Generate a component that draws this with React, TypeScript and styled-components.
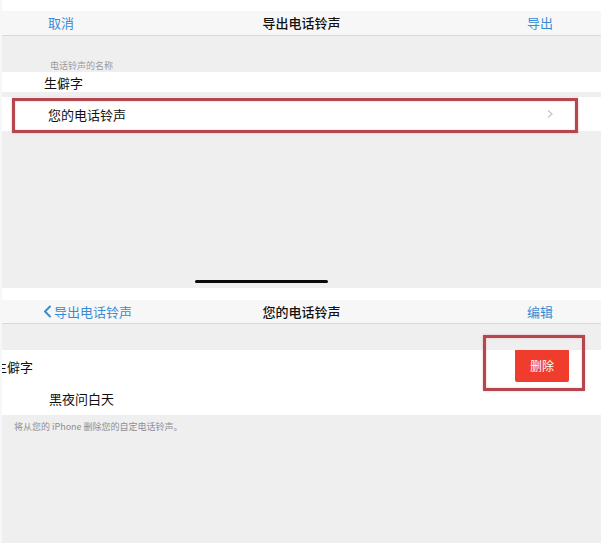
import React from "react";
import styled, { createGlobalStyle } from "styled-components";

const GlobalStyle = createGlobalStyle`
  html, body { margin: 0; padding: 0; background: #efeff0; }
  body { font-family: "Noto Sans CJK SC", "Noto Sans", sans-serif; }
  * { box-sizing: border-box; }
`;

const Page = styled.div`
  width: 601px;
  height: 543px;
  display: flex;
  flex-direction: column;
  overflow: hidden;
`;

const Panel = styled.section<{ $h: number }>`
  position: relative;
  height: ${(p) => p.$h}px;
  display: flex;
  flex-direction: column;
  background: #efeff0;
  border-left: 2px solid #f7f7f7;
  flex-shrink: 0;
`;

const TopStrip = styled.div<{ $h: number }>`
  height: ${(p) => p.$h}px;
  background: #ffffff;
  flex-shrink: 0;
`;

const NavBar = styled.header<{ $h: number }>`
  height: ${(p) => p.$h}px;
  background: #f7f7f8;
  border-bottom: 1px solid #d9d9db;
  display: grid;
  grid-template-columns: 1fr auto 1fr;
  align-items: center;
  font-size: 13px;
  line-height: 16px;
  flex-shrink: 0;
`;

const NavLeft = styled.div<{ $pad: number }>`
  padding-left: ${(p) => p.$pad}px;
  display: flex;
  align-items: center;
  gap: 2px;
  color: #3a8bd3;
`;

const NavTitle = styled.div`
  color: #111;
  font-weight: 500;
  text-align: center;
`;

const NavRight = styled.div`
  justify-self: end;
  padding-right: 48px;
  color: #3a8bd3;
`;

const SectionLabel = styled.div`
  padding: 24px 0 0 48px;
  font-size: 9px;
  line-height: 12px;
  color: #9a9a9e;
`;

const Row = styled.div<{ $h: number; $indent: number }>`
  position: relative;
  height: ${(p) => p.$h}px;
  background: #ffffff;
  display: flex;
  align-items: center;
  padding-left: ${(p) => p.$indent}px;
  font-size: 13px;
  color: #111;
  flex-shrink: 0;
`;

const RowText = styled.span<{ $shift?: number }>`
  margin-left: ${(p) => p.$shift ?? 0}px;
  white-space: nowrap;
`;

const Chevron = styled.svg`
  position: absolute;
  right: 48px;
  top: 50%;
  transform: translateY(-50%);
`;

const Highlight = styled.div<{ $l: number; $t: number; $w: number; $h: number }>`
  position: absolute;
  left: ${(p) => p.$l}px;
  top: ${(p) => p.$t}px;
  width: ${(p) => p.$w}px;
  height: ${(p) => p.$h}px;
  border: 3px solid #b3474d;
  box-shadow: 0 0 2px rgba(240, 150, 150, 0.7), inset 0 0 2px rgba(240, 150, 150, 0.7);
  pointer-events: none;
`;

const Spacer = styled.div<{ $h?: number }>`
  height: ${(p) => (p.$h ? `${p.$h}px` : "auto")};
  flex: ${(p) => (p.$h ? "0 0 auto" : "1 1 auto")};
`;

const HomeIndicator = styled.div`
  width: 133px;
  height: 3px;
  margin: 0 0 5px 193px;
  background: #0a0a0a;
  border-radius: 2px;
  flex-shrink: 0;
`;

const List = styled.div`
  display: flex;
  flex-direction: column;
  overflow: hidden;
`;

const DeleteButton = styled.div`
  position: absolute;
  left: 513px;
  top: -1px;
  width: 54px;
  height: 33px;
  background: #f03c2c;
  border-radius: 2px;
  color: #ffffff;
  font-size: 12px;
  display: flex;
  align-items: center;
  justify-content: center;
`;

const Footnote = styled.div`
  padding: 6px 0 0 12px;
  font-size: 9px;
  line-height: 12px;
  color: #8e8e93;
`;

export default function App() {
  return (
    <>
      <GlobalStyle />
      <Page>
        <Panel $h={288}>
          <TopStrip $h={11} />
          <NavBar $h={25}>
            <NavLeft $pad={46}>取消</NavLeft>
            <NavTitle>导出电话铃声</NavTitle>
            <NavRight>导出</NavRight>
          </NavBar>
          <SectionLabel>电话铃声的名称</SectionLabel>
          <Row $h={20} $indent={42}>
            <RowText>生僻字</RowText>
          </Row>
          <Spacer $h={5} />
          <Row $h={34} $indent={46}>
            <RowText>您的电话铃声</RowText>
            <Chevron width="6" height="9" viewBox="0 0 6 9">
              <polyline points="1,1 5,4.5 1,8" fill="none" stroke="#c4c4c8" strokeWidth="1.2" />
            </Chevron>
          </Row>
          <Highlight $l={10} $t={98} $w={566} $h={35} />
          <Spacer />
          <HomeIndicator />
        </Panel>
        <Panel $h={255}>
          <TopStrip $h={12} />
          <NavBar $h={24}>
            <NavLeft $pad={41}>
              <svg width="9" height="13" viewBox="0 0 9 13">
                <polyline points="7,1.5 2,6.5 7,11.5" fill="none" stroke="#3a8bd3" strokeWidth="2" strokeLinecap="round" strokeLinejoin="round" />
              </svg>
              导出电话铃声
            </NavLeft>
            <NavTitle>您的电话铃声</NavTitle>
            <NavRight>编辑</NavRight>
          </NavBar>
          <Spacer $h={26} />
          <List>
            <Row $h={32} $indent={0}>
              <RowText $shift={-8}>生僻字</RowText>
              <DeleteButton>删除</DeleteButton>
            </Row>
            <Row $h={33} $indent={47}>
              <RowText>黑夜问白天</RowText>
            </Row>
          </List>
          <Footnote>将从您的 iPhone 删除您的自定电话铃声。</Footnote>
          <Spacer />
          <Highlight $l={481} $t={47} $w={102} $h={56} />
        </Panel>
      </Page>
    </>
  );
}
